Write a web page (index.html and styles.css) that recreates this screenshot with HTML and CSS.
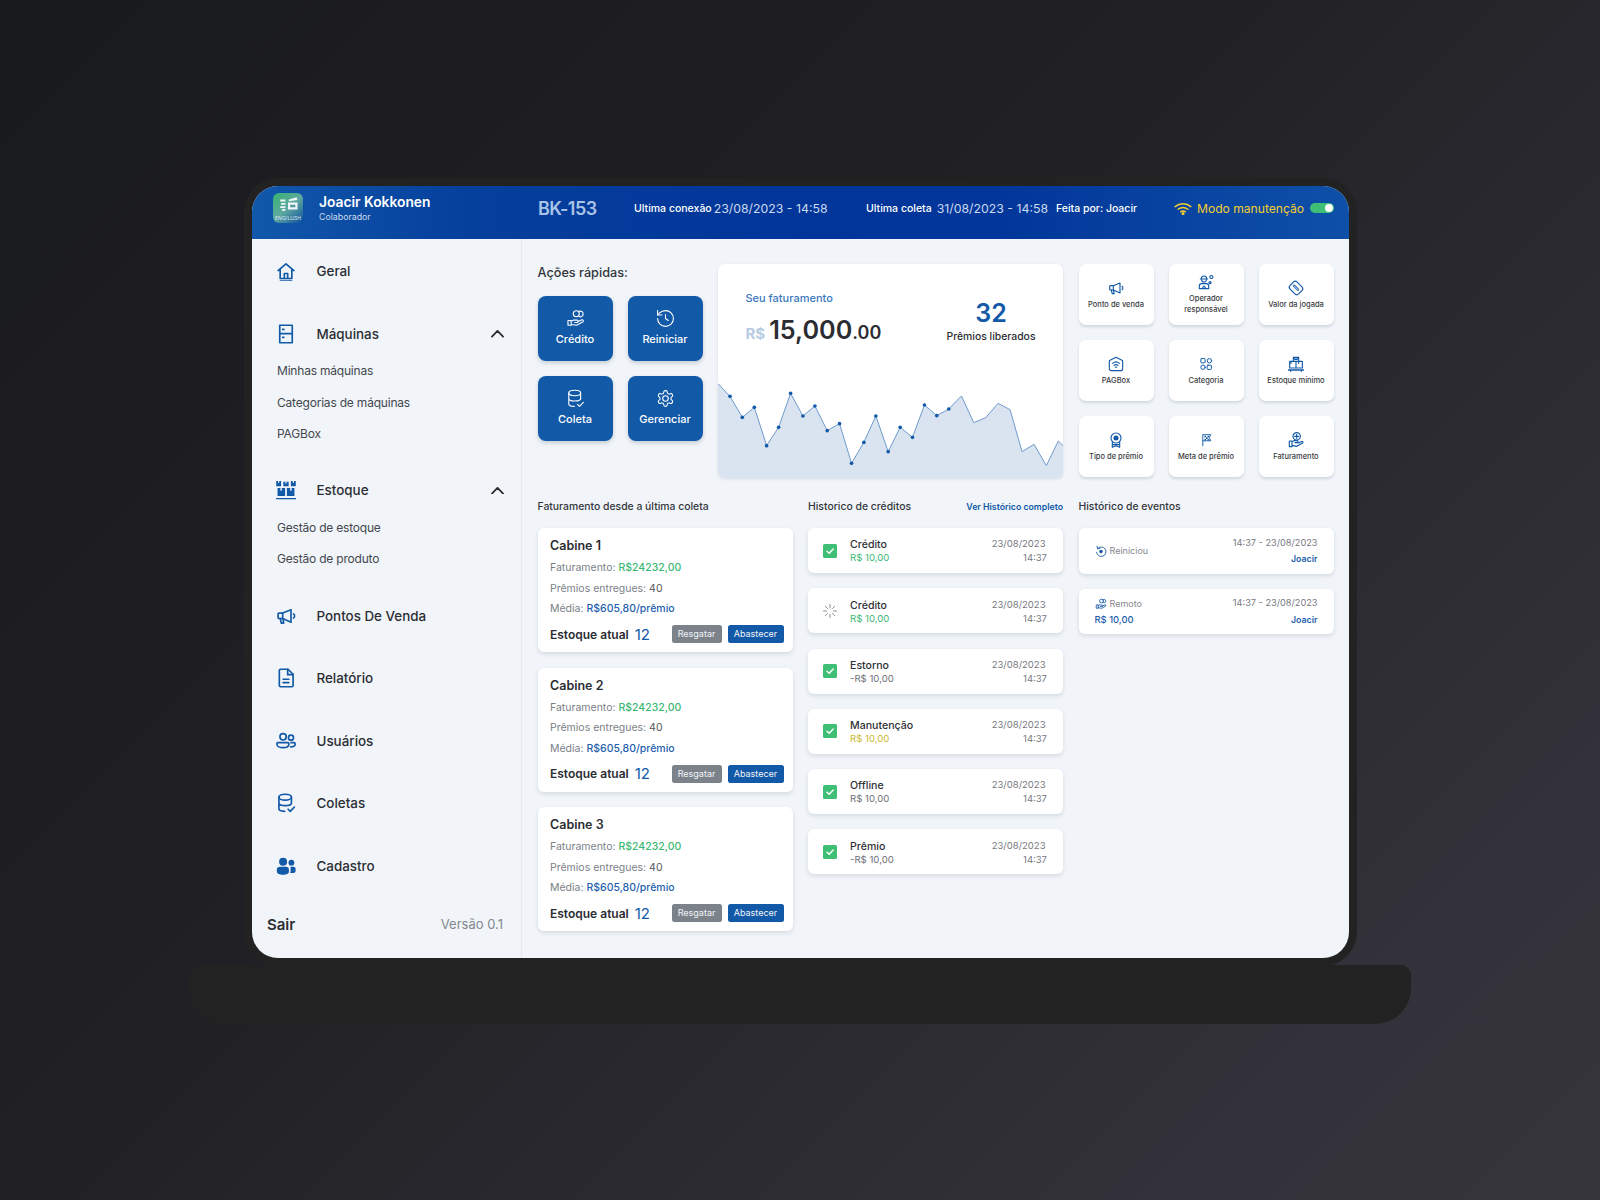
FILE: index.html
```html
<!DOCTYPE html>
<html lang="pt-BR">
<head>
<meta charset="utf-8">
<title>BK-153</title>
<link rel="stylesheet" href="styles.css">
</head>
<body>
<svg class="defs" width="0" height="0" aria-hidden="true">
  <symbol id="i-home" viewBox="0 0 24 24"><path d="M2.500 11.500 12 3.500l9.500 8M5 9.500V21h14V9.500M10 21v-6h4v6"/><path d="M5 23.300h14" stroke-width="1"/></symbol>
  <symbol id="i-machine" viewBox="0 0 24 24"><rect x="4.500" y="1.500" width="15" height="21"/><path d="M4.500 11.500h15"/><path d="M8 6.500h1.500M8 16h1.500"/></symbol>
  <symbol id="i-stock" viewBox="1 0 22 22.500"><path class="fill" d="M1 1h5.500v6H1zM9 2h6v5H9zM17.500 1H23v6h-5.500zM2.500 9h8.500v9H2.500zM13 9h8.500v9H13z"/><path d="M1 21h22" stroke-width="1.500"/><path class="hole" d="M5.700 9h1.600v3H5.700zM16.700 9h1.600v3h-1.600zM3 1h1.400v2H3zM19.600 1H21v2h-1.400zM11.300 2h1.400v2h-1.400z"/></symbol>
  <symbol id="i-mega" viewBox="0 0 24 24"><path d="M2.500 9.500v4.500a1 1 0 0 0 1 1H8l10 4.500V4.500L8 8.500H3.500a1 1 0 0 0-1 1z"/><path d="M5 15l1.300 5.500h3l-1-4.700M8 8.500V15M21 9.500a3 3 0 0 1 0 5"/></symbol>
  <symbol id="i-doc" viewBox="0 0 24 24"><path d="M5.500 1.500h9L20.500 7.500V21a1.500 1.500 0 0 1-1.500 1.500H5.500A1.500 1.500 0 0 1 4 21V3a1.500 1.500 0 0 1 1.500-1.500z"/><path d="M14 1.500v6.500h6.500M8.500 13.500h7M8.500 17.500h7"/></symbol>
  <symbol id="i-users" viewBox="0 0 24 24"><circle cx="8.500" cy="7" r="3.800"/><circle cx="18" cy="8" r="3"/><path d="M2 14h12c1 0 1.500.6 1.500 1.500 0 3-3.500 4.500-7 4.500S1 18.500 1 15.500C1 14.600 1.200 14 2 14z"/><path d="M18 14h3.500c1 0 1.500.6 1.500 1.500 0 2.500-2.500 3.500-5.500 3.500"/></symbol>
  <symbol id="i-db" viewBox="0 0 24 24"><ellipse cx="11" cy="5" rx="7.500" ry="3.500"/><path d="M3.500 5v14c0 1.800 3.300 3 7 3M18.500 5v8M3.500 12c0 1.800 3.300 3.200 7.500 3.200s7.500-1.400 7.500-3.200M14.500 19.500l2.500 2.500 5-5"/></symbol>
  <symbol id="i-people" viewBox="0 0 24 24"><path class="fill" d="M8.500 2a4.800 4.800 0 1 1 0 9.600 4.800 4.800 0 0 1 0-9.600zM18.500 4.500a3.500 3.500 0 1 1 0 7 3.500 3.500 0 0 1 0-7zM1 16.500C1 14 2.500 13 5 13h7c2.500 0 3.500 1.500 3.500 3.500V19c0 2.500-3 3.500-7 3.500S1 21 1 18.500zM17.500 13H21c1.500 0 2.500 1 2.500 2.500V18c0 1.800-1.500 2.500-3.500 2.500h-3c.3-1 .5-1.500.5-2.500z"/></symbol>
  <symbol id="i-hand" viewBox="0 0 24 24"><circle cx="13" cy="6" r="3.800"/><path d="M16.500 3a3.600 3.600 0 1 1 0 6.500"/><path d="M2.500 14.500v6h4v-6zM6.500 15.500l3-1.500h4.500a1.500 1.500 0 0 1 0 3h-3M6.500 19.500l7 1 8-4.500a1.400 1.400 0 0 0-1.500-2.300l-5 2.300"/></symbol>
  <symbol id="i-history" viewBox="0 0 24 24"><path d="M2 12a10 10 0 1 0 10-10 10.800 10.800 0 0 0-7.500 3L2 7.500"/><path d="M2 2v5.500h5.500M12 7v5l3.500 2.500"/></symbol>
  <symbol id="i-gear" viewBox="0 0 24 24"><path d="M12.220 2h-.44a2 2 0 0 0-2 2v.18a2 2 0 0 1-1 1.730l-.43.250a2 2 0 0 1-2 0l-.15-.08a2 2 0 0 0-2.730.730l-.22.380a2 2 0 0 0 .730 2.730l.15.1a2 2 0 0 1 1 1.720v.510a2 2 0 0 1-1 1.740l-.15.090a2 2 0 0 0-.730 2.730l.22.380a2 2 0 0 0 2.730.730l.15-.08a2 2 0 0 1 2 0l.43.250a2 2 0 0 1 1 1.730V20a2 2 0 0 0 2 2h.44a2 2 0 0 0 2-2v-.18a2 2 0 0 1 1-1.730l.43-.25a2 2 0 0 1 2 0l.15.08a2 2 0 0 0 2.730-.730l.22-.39a2 2 0 0 0-.730-2.730l-.15-.08a2 2 0 0 1-1-1.740v-.5a2 2 0 0 1 1-1.740l.15-.09a2 2 0 0 0 .730-2.730l-.22-.38a2 2 0 0 0-2.730-.730l-.15.08a2 2 0 0 1-2 0l-.43-.25a2 2 0 0 1-1-1.730V4a2 2 0 0 0-2-2z"/><circle cx="12" cy="12" r="3.500"/></symbol>
  <symbol id="i-operator" viewBox="0 0 24 24"><path d="M5 7c0-2.500 1.500-4 4-4s4 1.500 4 4M3.500 7.500h11"/><path d="M5.500 8.500a3.500 3.500 0 0 0 7 0"/><path d="M2 22v-4c0-2 1.500-3.500 3.500-3.500h7c2 0 3.500 1.500 3.500 3.500v4zM6 22l3-4 3 4"/><circle cx="20" cy="4.500" r="2.300"/><circle cx="18" cy="13" r="1.500"/></symbol>
  <symbol id="i-tag" viewBox="0 0 24 24"><rect x="4.500" y="3" width="15" height="18" rx="4" transform="rotate(-45 12 12)"/><path d="M9 8.500l6 6" stroke-width="3.600"/><path class="hole-line" d="M9 8.500l6 6" stroke-width="1.400"/></symbol>
  <symbol id="i-pagbox" viewBox="0 0 24 24"><path d="M12 2 21 6.500a1.500 1.500 0 0 1 1 1.500v11a3 3 0 0 1-3 3H5a3 3 0 0 1-3-3V8a1.500 1.500 0 0 1 1-1.500z"/><path d="M7 11c3-2.500 7-2.500 10 0M9 14c2-1.500 4-1.500 6 0M11 16.800c.7-.4 1.300-.4 2 0"/></symbol>
  <symbol id="i-category" viewBox="-2 -2 28 28"><rect x="3" y="2.500" width="7.500" height="7.500" rx="1.500"/><circle cx="18" cy="6.300" r="3.800"/><circle cx="6.800" cy="17.700" r="3.800"/><rect x="14" y="14" width="7.500" height="7.500" rx="1.500"/></symbol>
  <symbol id="i-boxes" viewBox="0 0 24 24"><path d="M8 8V2h8v6M2.500 8h19v10h-19zM12 8v10M10 2v3h4V2M4.500 8v3M16 8v3"/><path d="M1 21h22" stroke-width="2.500"/><path d="M4 23.500v-2M20 23.500v-2" stroke-width="1.500"/></symbol>
  <symbol id="i-award" viewBox="0 0 24 24"><circle cx="12" cy="9" r="7.500"/><circle class="fill" cx="12" cy="9" r="3.800"/><path d="M6.500 14.500V23l5.500-2.500 5.500 2.500v-8.500M6.500 19h11"/></symbol>
  <symbol id="i-flag" viewBox="-4 -3 30 30"><path d="M5 23V2h15l-3 5.500 3 6H5"/><path class="fill" d="M8 4h3v3H8zM14 4h3v3h-3zM11 7h3v3h-3zM8 10h3v3H8zM14 10h3v3h-3z"/></symbol>
  <symbol id="i-coinhand" viewBox="0 0 24 24"><circle cx="13" cy="6.500" r="5.500"/><path d="M13 3.500v6M10 6.500h6"/><path d="M2 13.500v8.500h4v-8.500zM6 14.500l3-1.500h4.500a1.500 1.500 0 0 1 0 3h-3M6 20l7 1.500 9-5a1.400 1.400 0 0 0-1.500-2.300l-5 2.300"/></symbol>
  <symbol id="i-restart" viewBox="0 0 24 24"><path d="M5 7.500a9.500 9.500 0 1 1-2 7M4 2.500l1 5 5-1"/><circle class="fill" cx="12" cy="13" r="3.500"/></symbol>
  <symbol id="i-check" viewBox="0 0 14 14"><rect class="box" width="14" height="14" rx="1.500"/><path class="mark" d="M4 7.300l2.200 2L10.200 5"/></symbol>
</svg>

<div class="device">
  <div class="screen">
    <header class="topbar">
      <div class="user">
        <div class="logo">
          <svg class="logo-art" viewBox="0 0 30 22"><path d="M6 4h6v2.500H6zM7 8h5v2H7zM6 12h6v2H6zM8 15h4v2H8z"/><path d="M16 4l9-2.500.8 3-9.800 1.500zM15 7.500h11v8H15z"/><path class="logo-hole" d="M17.500 10h6v3h-6z"/></svg>
          <span class="logo-name">ENG/LUSH</span>
        </div>
        <div class="user-text">
          <div class="user-name">Joacir Kokkonen</div>
          <div class="user-role">Colaborador</div>
        </div>
      </div>
      <div class="machine-code">BK-153</div>
      <div class="meta meta-conn"><b>Ultima conexão</b><span>23/08/2023 - 14:58</span></div>
      <div class="meta meta-coll"><b>Ultima coleta</b><span>31/08/2023 - 14:58</span></div>
      <div class="meta meta-by"><b>Feita por: Joacir</b></div>
      <div class="maint">
        <svg class="wifi" viewBox="0 0 24 16"><path d="M1.500 5.500c6-5 15-5 21 0M5.500 9c4-3 9-3 13 0M9 12.300c2-1.300 4-1.300 6 0"/><circle cx="12" cy="14.700" r="1.100"/></svg>
        <span class="maint-label">Modo manutenção</span>
        <span class="toggle"><i></i></span>
      </div>
    </header>

    <div class="body">
      <aside class="sidebar">
        <a class="nav-item"><svg class="ic nav-ic"><use href="#i-home"/></svg><span>Geral</span></a>
        <a class="nav-item"><svg class="ic nav-ic"><use href="#i-machine"/></svg><span>Máquinas</span><svg class="chev" viewBox="0 0 14 8"><path d="M1 7l6-6 6 6"/></svg></a>
        <div class="sub">
          <a>Minhas máquinas</a>
          <a>Categorias de máquinas</a>
          <a>PAGBox</a>
        </div>
        <a class="nav-item"><svg class="ic nav-ic"><use href="#i-stock"/></svg><span>Estoque</span><svg class="chev" viewBox="0 0 14 8"><path d="M1 7l6-6 6 6"/></svg></a>
        <div class="sub">
          <a>Gestão de estoque</a>
          <a>Gestão de produto</a>
        </div>
        <a class="nav-item"><svg class="ic nav-ic"><use href="#i-mega"/></svg><span>Pontos De Venda</span></a>
        <a class="nav-item"><svg class="ic nav-ic"><use href="#i-doc"/></svg><span>Relatório</span></a>
        <a class="nav-item"><svg class="ic nav-ic"><use href="#i-users"/></svg><span>Usuários</span></a>
        <a class="nav-item"><svg class="ic nav-ic"><use href="#i-db"/></svg><span>Coletas</span></a>
        <a class="nav-item"><svg class="ic nav-ic"><use href="#i-people"/></svg><span>Cadastro</span></a>
        <div class="side-foot"><b>Sair</b><span>Versão 0.1</span></div>
      </aside>

      <main class="main">
        <section class="top-row">
          <div class="quick">
            <h2 class="quick-title">Ações rápidas:</h2>
            <div class="quick-grid">
              <button class="quick-btn"><svg class="ic ic-white"><use href="#i-hand"/></svg>Crédito</button>
              <button class="quick-btn"><svg class="ic ic-white"><use href="#i-history"/></svg>Reiniciar</button>
              <button class="quick-btn"><svg class="ic ic-white"><use href="#i-db"/></svg>Coleta</button>
              <button class="quick-btn"><svg class="ic ic-white"><use href="#i-gear"/></svg>Gerenciar</button>
            </div>
          </div>

          <div class="chart-card">
            <div class="chart-head">
              <div>
                <div class="chart-label">Seu faturamento</div>
                <div class="amount"><span class="cur">R$</span> <span class="big">15,000</span><span class="cents">.00</span></div>
              </div>
              <div class="prizes">
                <div class="prizes-n">32</div>
                <div class="prizes-l">Prêmios liberados</div>
              </div>
            </div>
            <svg class="chart" viewBox="54 0 1036 352" preserveAspectRatio="none">
              <path class="area" d="M54 68 90 106 127 169 163 139 200 254 236 199 272 97 309 165 345 135 382 209 419 188 455 307 492 244 528 165 565 272 601 199 638 229 674 132 711 164 747 144 785 105 822 185 858 170 895 127 931 146 967 272 1003 250 1040 314 1076 240 1090 254V352H54z"/>
              <path class="line" d="M54 68 90 106 127 169 163 139 200 254 236 199 272 97 309 165 345 135 382 209 419 188 455 307 492 244 528 165 565 272 601 199 638 229 674 132 711 164 747 144 785 105 822 185 858 170 895 127 931 146 967 272 1003 250 1040 314 1076 240 1090 254"/>
              <g class="dots">
                <circle cx="90" cy="106" r="5.500"/><circle cx="127" cy="169" r="5.500"/><circle cx="163" cy="139" r="5.500"/><circle cx="200" cy="254" r="5.500"/><circle cx="236" cy="199" r="5.500"/><circle cx="272" cy="97" r="5.500"/><circle cx="309" cy="165" r="5.500"/><circle cx="345" cy="135" r="5.500"/><circle cx="382" cy="209" r="5.500"/><circle cx="419" cy="188" r="5.500"/><circle cx="455" cy="307" r="5.500"/><circle cx="492" cy="244" r="5.500"/><circle cx="528" cy="165" r="5.500"/><circle cx="565" cy="272" r="5.500"/><circle cx="601" cy="199" r="5.500"/><circle cx="638" cy="229" r="5.500"/><circle cx="674" cy="132" r="5.500"/><circle cx="711" cy="164" r="5.500"/><circle cx="747" cy="144" r="5.500"/>
              </g>
            </svg>
          </div>

          <div class="tiles">
            <a class="tile"><svg class="ic tile-ic"><use href="#i-mega"/></svg><span>Ponto de venda</span></a>
            <a class="tile"><svg class="ic tile-ic"><use href="#i-operator"/></svg><span>Operador<br>responsável</span></a>
            <a class="tile"><svg class="ic tile-ic"><use href="#i-tag"/></svg><span>Valor da jogada</span></a>
            <a class="tile"><svg class="ic tile-ic"><use href="#i-pagbox"/></svg><span>PAGBox</span></a>
            <a class="tile"><svg class="ic tile-ic"><use href="#i-category"/></svg><span>Categoria</span></a>
            <a class="tile"><svg class="ic tile-ic"><use href="#i-boxes"/></svg><span>Estoque mínimo</span></a>
            <a class="tile"><svg class="ic tile-ic"><use href="#i-award"/></svg><span>Tipo de prêmio</span></a>
            <a class="tile"><svg class="ic tile-ic"><use href="#i-flag"/></svg><span>Meta de prêmio</span></a>
            <a class="tile"><svg class="ic tile-ic"><use href="#i-coinhand"/></svg><span>Faturamento</span></a>
          </div>
        </section>

        <section class="low-row">
          <div class="col">
            <h3 class="col-title">Faturamento desde a última coleta</h3>
            <div class="cabins">
              <article class="cabin">
                <h4>Cabine 1</h4>
                <p>Faturamento: <em class="green">R$24232,00</em></p>
                <p>Prêmios entregues: <em class="dark">40</em></p>
                <p>Média: <em class="blue">R$605,80/prêmio</em></p>
                <div class="cabin-foot"><strong>Estoque atual</strong><span class="qty">12</span><button class="btn btn-gray">Resgatar</button><button class="btn btn-blue">Abastecer</button></div>
              </article>
              <article class="cabin">
                <h4>Cabine 2</h4>
                <p>Faturamento: <em class="green">R$24232,00</em></p>
                <p>Prêmios entregues: <em class="dark">40</em></p>
                <p>Média: <em class="blue">R$605,80/prêmio</em></p>
                <div class="cabin-foot"><strong>Estoque atual</strong><span class="qty">12</span><button class="btn btn-gray">Resgatar</button><button class="btn btn-blue">Abastecer</button></div>
              </article>
              <article class="cabin">
                <h4>Cabine 3</h4>
                <p>Faturamento: <em class="green">R$24232,00</em></p>
                <p>Prêmios entregues: <em class="dark">40</em></p>
                <p>Média: <em class="blue">R$605,80/prêmio</em></p>
                <div class="cabin-foot"><strong>Estoque atual</strong><span class="qty">12</span><button class="btn btn-gray">Resgatar</button><button class="btn btn-blue">Abastecer</button></div>
              </article>
            </div>
          </div>

          <div class="col">
            <div class="col-head"><h3 class="col-title">Historico de créditos</h3><a class="see-all">Ver Histórico completo</a></div>
            <div class="credits">
              <article class="credit"><svg class="check"><use href="#i-check"/></svg><div class="credit-main"><b>Crédito</b><span class="green">R$ 10,00</span></div><div class="credit-when"><span>23/08/2023</span><span>14:37</span></div></article>
              <article class="credit">
                <svg class="spinner" viewBox="0 0 14 14"><path d="M7 .5v3M7 10.500v3M.5 7h3M10.500 7h3M2.400 2.400l2.100 2.100M9.500 9.500l2.100 2.100M2.400 11.600l2.100-2.100M9.500 4.500l2.100-2.100"/></svg>
                <div class="credit-main"><b>Crédito</b><span class="green">R$ 10,00</span></div><div class="credit-when"><span>23/08/2023</span><span>14:37</span></div></article>
              <article class="credit"><svg class="check"><use href="#i-check"/></svg><div class="credit-main"><b>Estorno</b><span>-R$ 10,00</span></div><div class="credit-when"><span>23/08/2023</span><span>14:37</span></div></article>
              <article class="credit"><svg class="check"><use href="#i-check"/></svg><div class="credit-main"><b>Manutenção</b><span class="yellow">R$ 10,00</span></div><div class="credit-when"><span>23/08/2023</span><span>14:37</span></div></article>
              <article class="credit"><svg class="check"><use href="#i-check"/></svg><div class="credit-main"><b>Offline</b><span>R$ 10,00</span></div><div class="credit-when"><span>23/08/2023</span><span>14:37</span></div></article>
              <article class="credit"><svg class="check"><use href="#i-check"/></svg><div class="credit-main"><b>Prêmio</b><span>-R$ 10,00</span></div><div class="credit-when"><span>23/08/2023</span><span>14:37</span></div></article>
            </div>
          </div>

          <div class="col">
            <h3 class="col-title">Histórico de eventos</h3>
            <div class="events">
              <article class="event"><div class="event-main"><div class="event-name"><svg class="ic ev-ic"><use href="#i-restart"/></svg>Reiniciou</div></div><div class="event-when"><span>14:37 - 23/08/2023</span><b>Joacir</b></div></article>
              <article class="event"><div class="event-main"><div class="event-name"><svg class="ic ev-ic"><use href="#i-hand"/></svg>Remoto</div><b class="event-val">R$ 10,00</b></div><div class="event-when"><span>14:37 - 23/08/2023</span><b>Joacir</b></div></article>
            </div>
          </div>
        </section>
      </main>
    </div>
  </div>
</div>
<div class="base"></div>
</body>
</html>
```

FILE: styles.css
```css
* { box-sizing: border-box; margin: 0; padding: 0; }
html, body { height: 1200px; }
body {
  display: flex; flex-direction: column; align-items: center;
  padding-top: 178px; overflow: hidden;
  background: linear-gradient(135deg, #191a1d 0%, #212125 44%, #33323a 85%, #36353c 100%);
  font-family: "Inter", "Liberation Sans", sans-serif; color: #2b2d33;
}
.defs { position: absolute; }
.device {
  width: 1113px; padding: 8px; margin-left: 1px;
  background: #222222; border-radius: 34px; position: relative; z-index: 1;
}
.base { width: 1222px; height: 59px; margin-top: -1px; background: #222222; border-radius: 10px 10px 36px 36px; }
.screen { width: 1097px; height: 772px; border-radius: 26px; overflow: hidden; background: #f1f5f9; }

/* icons */
.ic { fill: none; stroke: #1259a7; stroke-width: 1.7; stroke-linecap: round; stroke-linejoin: round; }
.ic .fill, .fill { fill: #1259a7; stroke: none; }
.hole { fill: #f1f5f9; stroke: none; }
.hole-line { stroke: #fff; }
.ic-white { stroke: #fff; width: 19px; height: 19px; stroke-width: 1.4; flex: none; }

/* top bar */
.topbar {
  height: 53px; display: flex; align-items: center; color: #fff; padding-bottom: 9px;
  background: linear-gradient(90deg, #1158aa 0%, #053f9c 20%, #02359a 50%, #02369a 68%, #0e50a8 100%);
}
.user { width: 286px; padding-left: 21px; display: flex; align-items: center; gap: 16px; }
.logo {
  width: 30px; height: 30px; border-radius: 6px; display: flex; flex-direction: column; align-items: center;
  background: linear-gradient(140deg, #35b56f 0%, #5ea8a0 50%, #0d4f9f 100%); overflow: hidden; padding-top: 3px;
}
.logo-art { width: 26px; height: 19px; fill: #f1f5f9; flex: none; }
.logo-hole { fill: #4f9c9b; }
.logo-name { font-size: 5px; line-height: 6px; color: #dfe9f3; white-space: nowrap; }
.user-name { font-size: 13.800px; line-height: 17px; font-weight: 600; }
.user-role { font-size: 8.800px; line-height: 12px; color: #cfdcee; }
.machine-code { width: 96px; font-size: 18px; font-weight: 600; color: #a9c4e6; letter-spacing: -.5px; }
.meta { display: flex; align-items: center; white-space: nowrap; }
.meta b { font-size: 10.500px; font-weight: 500; }
.meta span { font-size: 12.300px; color: #cbdaef; }
.meta-conn { gap: 2px; width: 232px; }
.meta-coll { gap: 5px; width: 190px; }
.meta-by { width: 118px; }
.maint { display: flex; align-items: center; }
.wifi { width: 18px; height: 13px; fill: #f4cd2f; stroke: #f4cd2f; stroke-width: 2; stroke-linecap: round; margin-right: 5px; }
.wifi path { fill: none; }
.maint-label { font-size: 12.100px; color: #f4cd2f; width: 113px; white-space: nowrap; }
.toggle { width: 24px; height: 10px; border-radius: 5px; background: #3fbf76; display: flex; justify-content: flex-end; align-items: center; padding-right: 1px; }
.toggle i { width: 8px; height: 8px; border-radius: 50%; background: #fff; }

/* body layout */
.body { display: flex; height: 719px; }
.sidebar { width: 270px; flex: none; border-right: 1px solid #e5e9ee; padding-top: 1.100px; display: flex; flex-direction: column; }
.nav-item { height: 62.500px; flex: none; padding: 0 17px 0 24px; display: flex; align-items: center; font-size: 13.400px; font-weight: 500; color: #2b2d33; }
.nav-ic { width: 20px; height: 20px; margin-right: 20.500px; flex: none; stroke-width: 2; }
.chev { width: 13px; height: 7.500px; margin-left: auto; fill: none; stroke: #2b2d33; stroke-width: 2; stroke-linecap: round; stroke-linejoin: round; }
.sub { margin: -10px 0 10px; padding-left: 25px; display: flex; flex-direction: column; }
.sub a { height: 31.350px; display: flex; align-items: center; font-size: 12px; letter-spacing: -.2px; color: #44474e; }
.side-foot { margin-top: auto; padding: 0 18px 24px 15px; display: flex; justify-content: space-between; align-items: center; height: 44px; }
.side-foot b { font-size: 15px; font-weight: 600; color: #2b2d33; }
.side-foot span { font-size: 13px; color: #84888f; }

.main { flex: 1; padding: 25px 15px 0 15.500px; }
.top-row { display: flex; gap: 15.500px; height: 214px; }

/* quick actions */
.quick { width: 165px; }
.quick-title { font-size: 12.700px; line-height: 17px; font-weight: 500; margin-bottom: 14.700px; color: #33353b; }
.quick-grid { display: grid; grid-template-columns: 75px 75px; grid-auto-rows: 65px; gap: 15px; }
.quick-btn {
  background: #1259a7; border: 0; border-radius: 8px; color: #fff; font: 500 11px/14px "Inter", sans-serif;
  display: flex; flex-direction: column; align-items: center; gap: 4px; padding-top: 13px;
  box-shadow: 0 2px 4px rgba(20, 40, 70, .2);
}

/* chart */
.chart-card { width: 345px; background: #fff; border-radius: 6px; display: flex; flex-direction: column; overflow: hidden; box-shadow: 0 1px 3px rgba(20, 40, 70, .12); }
.chart-head { display: flex; justify-content: space-between; padding: 27px 7px 0 27.500px; }
.chart-label { font-size: 11px; line-height: 14px; color: #3b78bd; font-weight: 500; }
.amount { margin-top: 9.500px; line-height: 30px; white-space: nowrap; color: #2b2d33; font-weight: 600; }
.cur { font-size: 15px; color: #b7cbe3; font-weight: 700; }
.big { font-size: 25.200px; }
.cents { font-size: 18px; }
.prizes { width: 130px; text-align: center; padding-top: 7px; }
.prizes-n { font-size: 25px; line-height: 31px; font-weight: 600; color: #1259a7; }
.prizes-l { font-size: 10.400px; line-height: 16px; font-weight: 500; }
.chart { width: 345px; height: 117.300px; margin-top: auto; display: block; }
.area { fill: #d9e4f0; }
.line { fill: none; stroke: #6e99cc; stroke-width: 3; }
.dots circle { fill: #1259a7; }

/* tiles */
.tiles { width: 255px; display: grid; grid-template-columns: repeat(3, 75px); grid-auto-rows: 61px; gap: 15px; }
.tile {
  background: #fff; border-radius: 7px; box-shadow: 0 2px 3px rgba(20, 40, 70, .14);
  display: flex; flex-direction: column; align-items: center; justify-content: center; gap: 3px;
  font-size: 7.500px; line-height: 11px; font-weight: 500; text-align: center; color: #3a3c42;
}
.tile-ic { width: 16px; height: 16px; flex: none; }

/* lower columns */
.low-row { display: flex; gap: 15.500px; margin-top: 21px; }
.col { width: 255px; flex: none; }
.col-title { font-size: 10.400px; line-height: 16px; font-weight: 500; color: #33353b; }
.col-head { display: flex; justify-content: space-between; align-items: center; }
.see-all { font-size: 8.750px; font-weight: 600; color: #1259a7; white-space: nowrap; }
.cabins, .credits, .events { margin-top: 13px; display: flex; flex-direction: column; }
.cabins { gap: 15.500px; }
.credits { gap: 15.300px; }
.events { gap: 15.300px; }
.cabin, .credit, .event { background: #fff; border-radius: 6px; box-shadow: 0 2px 4px rgba(20, 40, 70, .13); }
.cabin { height: 124px; padding: 9px 9px 0 12.500px; }
.cabin h4 { font-size: 12.500px; line-height: 18px; font-weight: 600; margin-bottom: 3.200px; color: #2b2d33; }
.cabin p { font-size: 10.500px; line-height: 20.600px; color: #7b7f87; }
.cabin em { font-style: normal; }
.green { color: #3bb873; }
.blue { color: #1f5fae; }
.dark { color: #55575c; }
.yellow { color: #c9b92e; }
.cabin .green, .cabin .blue { font-weight: 500; }
.cabin-foot { display: flex; align-items: center; margin-top: 5.200px; height: 18px; }
.cabin-foot strong { font-size: 12px; font-weight: 600; white-space: nowrap; }
.qty { font-size: 15px; color: #1259a7; margin-left: 6px; }
.btn { height: 18px; border: 0; border-radius: 2.500px; color: #f2f5f8; font: 400 9px/18px "Inter", sans-serif; }
.btn-gray { width: 50px; background: #7b828a; margin-left: auto; }
.btn-blue { width: 56px; background: #1259a7; margin-left: 6px; }

.credit { height: 45px; display: flex; align-items: center; padding: 0 16px 0 15px; }
.check { width: 14px; height: 14px; flex: none; margin-right: 13px; }
.spinner { width: 14px; height: 14px; flex: none; margin-right: 13px; stroke: #8a8d92; stroke-width: 1; stroke-linecap: round; fill: none; }
.box { fill: #3fbf76; }
.mark { fill: none; stroke: #fff; stroke-width: 1.400; stroke-linecap: round; stroke-linejoin: round; }
.credit-main { display: flex; flex-direction: column; flex: 1; padding-top: 1.500px; }
.credit-main b { font-size: 10.600px; line-height: 13px; font-weight: 500; color: #2f3136; }
.credit-main span { font-size: 9.600px; line-height: 13px; color: #6e7177; }
.credit-main span.green { color: #3bb873; }
.credit-main span.yellow { color: #c9b92e; }
.credit-when { display: flex; flex-direction: column; align-items: flex-end; font-size: 9.500px; line-height: 14px; color: #77797f; padding-top: 1.500px; }
.credit-when span:first-child { padding-right: 1.500px; }

.event { height: 45.500px; display: flex; align-items: center; justify-content: space-between; padding: 0 16px; }
.event-name { display: flex; align-items: center; gap: 3px; font-size: 9px; color: #85888e; line-height: 14px; padding-top: 1px; }
.ev-ic { width: 12px; height: 12px; flex: none; }
.event-val { display: block; font-size: 9.400px; line-height: 14px; font-weight: 500; color: #1f5fae; margin-top: 2px; }
.event-when { display: flex; flex-direction: column; align-items: flex-end; gap: 2.500px; font-size: 9.200px; line-height: 14px; color: #77797f; }
.event-when b { color: #1f5fae; font-weight: 600; font-size: 8.800px; }
```
